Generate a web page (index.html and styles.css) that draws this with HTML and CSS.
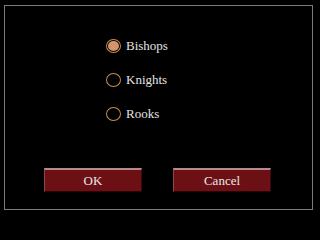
FILE: index.html
```html
<!DOCTYPE html>
<html>
<head>
<meta charset="utf-8">
<link rel="stylesheet" href="styles.css">
</head>
<body>
<div class="frame">
  <div class="options">
    <label class="opt"><span class="radio checked"></span><span class="lbl">Bishops</span></label>
    <label class="opt"><span class="radio"></span><span class="lbl">Knights</span></label>
    <label class="opt"><span class="radio"></span><span class="lbl">Rooks</span></label>
  </div>
  <div class="buttons">
    <button class="btn">OK</button>
    <button class="btn">Cancel</button>
  </div>
</div>
</body>
</html>
```
FILE: styles.css
```css
html, body {
  margin: 0;
  padding: 0;
  background: #000;
  width: 317px;
  height: 214px;
  overflow: hidden;
}
body {
  font-family: "Liberation Serif", "Times New Roman", serif;
  font-size: 13px;
  color: #e4e4e4;
}
.frame {
  box-sizing: border-box;
  margin: 5px 0 0 4px;
  width: 309px;
  height: 205px;
  border: 1px solid #7c7c7c;
  display: flex;
  flex-direction: column;
}
.options {
  margin-top: 23px;
  padding-left: 101px;
  display: flex;
  flex-direction: column;
}
.opt {
  height: 34px;
  display: flex;
  align-items: center;
  gap: 5px;
}
.radio {
  box-sizing: border-box;
  width: 15px;
  height: 14px;
  border-radius: 50%;
  border: 1px solid #c48a52;
  padding: 1px;
  background-clip: content-box;
}
.radio.checked {
  background-color: #d4956a;
}
.lbl {
  line-height: 14px;
}
.buttons {
  margin-top: 37px;
  padding-left: 39px;
  display: flex;
  gap: 31px;
}
.btn {
  box-sizing: border-box;
  width: 98px;
  height: 24px;
  margin: 0;
  padding: 0;
  background: #6c1015;
  color: #e8e8e8;
  font-family: "Liberation Serif", "Times New Roman", serif;
  font-size: 13px;
  border-style: solid;
  border-width: 2px 1px 1px 1px;
  border-color: #b48a8a #3a080a #2a0406 #8a4a4c;
}
```
